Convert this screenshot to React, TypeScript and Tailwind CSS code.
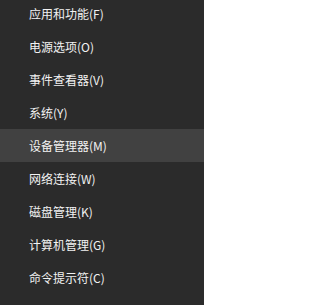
import React from 'react';

const items = [
  '应用和功能(F)',
  '电源选项(O)',
  '事件查看器(V)',
  '系统(Y)',
  '设备管理器(M)',
  '网络连接(W)',
  '磁盘管理(K)',
  '计算机管理(G)',
  '命令提示符(C)',
];

export default function App() {
  return (
    <div className="w-[204px] h-[305px] bg-[#2b2b2b] overflow-hidden font-['Noto_Sans_CJK_SC',sans-serif]">
      <ul className="-mt-[3px] flex flex-col">
        {items.map((label, i) =>
        <li
          key={label}
          className={`h-[33px] flex items-center pl-[29px] text-[12px] text-[#f2f2f2] ${i === 4 ? 'bg-[#414141]' : ''}`}>
            {label}
          </li>
        )}
      </ul>
    </div>);

}
